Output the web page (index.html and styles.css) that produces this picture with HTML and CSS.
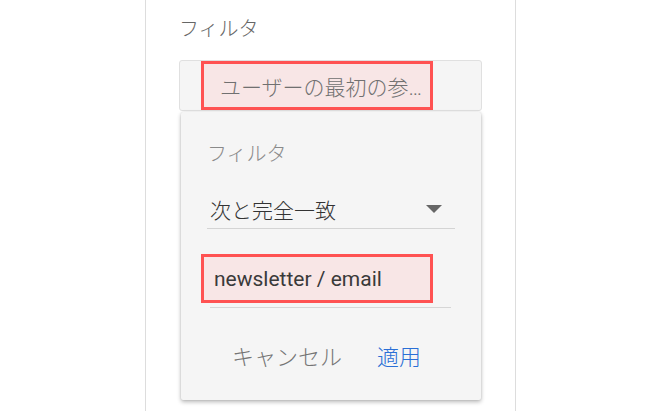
FILE: index.html
```html
<!DOCTYPE html>
<html lang="ja">
<head>
    <meta charset="UTF-8">
    <meta name="viewport" content="width=device-width, initial-scale=1.0">
    <title>フィルタ</title>
    <link rel="stylesheet" href="styles.css">
</head>
<body>

<div class="panel">
    <h2 class="title">フィルタ</h2>

    <!-- 選択中のディメンション -->
    <div class="field">
        <span class="chip">ユーザーの最初の参…</span>

        <!-- フィルタのポップアップ -->
        <div class="popup">
            <div class="popup-label">フィルタ</div>
            <div class="select">
                <span>次と完全一致</span>
                <span class="arrow"></span>
            </div>
            <div class="input-row">
                <span class="value">newsletter / email</span>
            </div>
            <div class="actions">
                <button class="btn">キャンセル</button>
                <button class="btn primary">適用</button>
            </div>
        </div>
    </div>
</div>

</body>
</html>
```

FILE: styles.css
```css
body {
    margin: 0;
    padding: 0;
    background-color: #fff;
    font-family: Roboto, "Noto Sans CJK JP", sans-serif;
    font-weight: 300;
    overflow: hidden;
}
.panel {
    box-sizing: border-box;
    margin-left: 145px;
    width: 371px;
    height: 411px;
    padding: 17px 0 0 33px;
    border-left: 1px solid #ddd;
    border-right: 1px solid #ddd;
}
.title {
    margin: 0;
    font-size: 20px;
    line-height: 24px;
    font-weight: 300;
    color: #666;
}
.field {
    position: relative;
    box-sizing: border-box;
    width: 303px;
    height: 51px;
    margin-top: 19px;
    padding-left: 21px;
    display: flex;
    align-items: center;
    background-color: #f5f5f5;
    border: 1px solid #e0e0e0;
    border-radius: 3px;
}
.chip {
    box-sizing: border-box;
    width: 232px;
    height: 49px;
    padding-left: 16px;
    display: flex;
    align-items: center;
    border: 3px solid #ff5252;
    background-color: #f8e6e6;
    font-size: 21px;
    color: #707070;
    white-space: nowrap;
}
.popup {
    position: absolute;
    left: 1px;
    top: 51px;
    box-sizing: border-box;
    width: 300px;
    height: 288px;
    padding: 30px 26px 0 26px;
    background-color: #f5f5f5;
    border-radius: 2px;
    box-shadow: 0 2px 4px rgba(0, 0, 0, 0.28), 0 0 2px rgba(0, 0, 0, 0.12);
}
.popup-label {
    font-size: 20px;
    line-height: 24px;
    color: #8a8a8a;
}
.select {
    height: 38px;
    margin-top: 24px;
    padding: 0 13px 0 3px;
    display: flex;
    align-items: center;
    justify-content: space-between;
    border-bottom: 1px solid #d4d4d4;
    font-size: 21px;
    color: #333;
}
.arrow {
    width: 0;
    height: 0;
    border-left: 8px solid transparent;
    border-right: 8px solid transparent;
    border-top: 8px solid #666;
}
.input-row {
    width: 241px;
    margin: 25px 0 0 3px;
    padding-bottom: 4px;
    border-bottom: 1px solid #d6d6d6;
}
.value {
    box-sizing: border-box;
    width: 232px;
    height: 49px;
    margin-left: -9px;
    padding-left: 10px;
    display: flex;
    align-items: center;
    border: 3px solid #ff5252;
    background-color: #f8e6e6;
    font-size: 21px;
    font-weight: normal;
    color: #3a3a3a;
}
.actions {
    display: flex;
    gap: 35px;
    margin-top: 38px;
    padding-left: 25px;
}
.btn {
    padding: 0;
    border: none;
    background: none;
    font-family: inherit;
    font-weight: 300;
    font-size: 22px;
    line-height: 24px;
    color: #757575;
    cursor: pointer;
}
.btn.primary {
    color: #2a6fd6;
}
```
